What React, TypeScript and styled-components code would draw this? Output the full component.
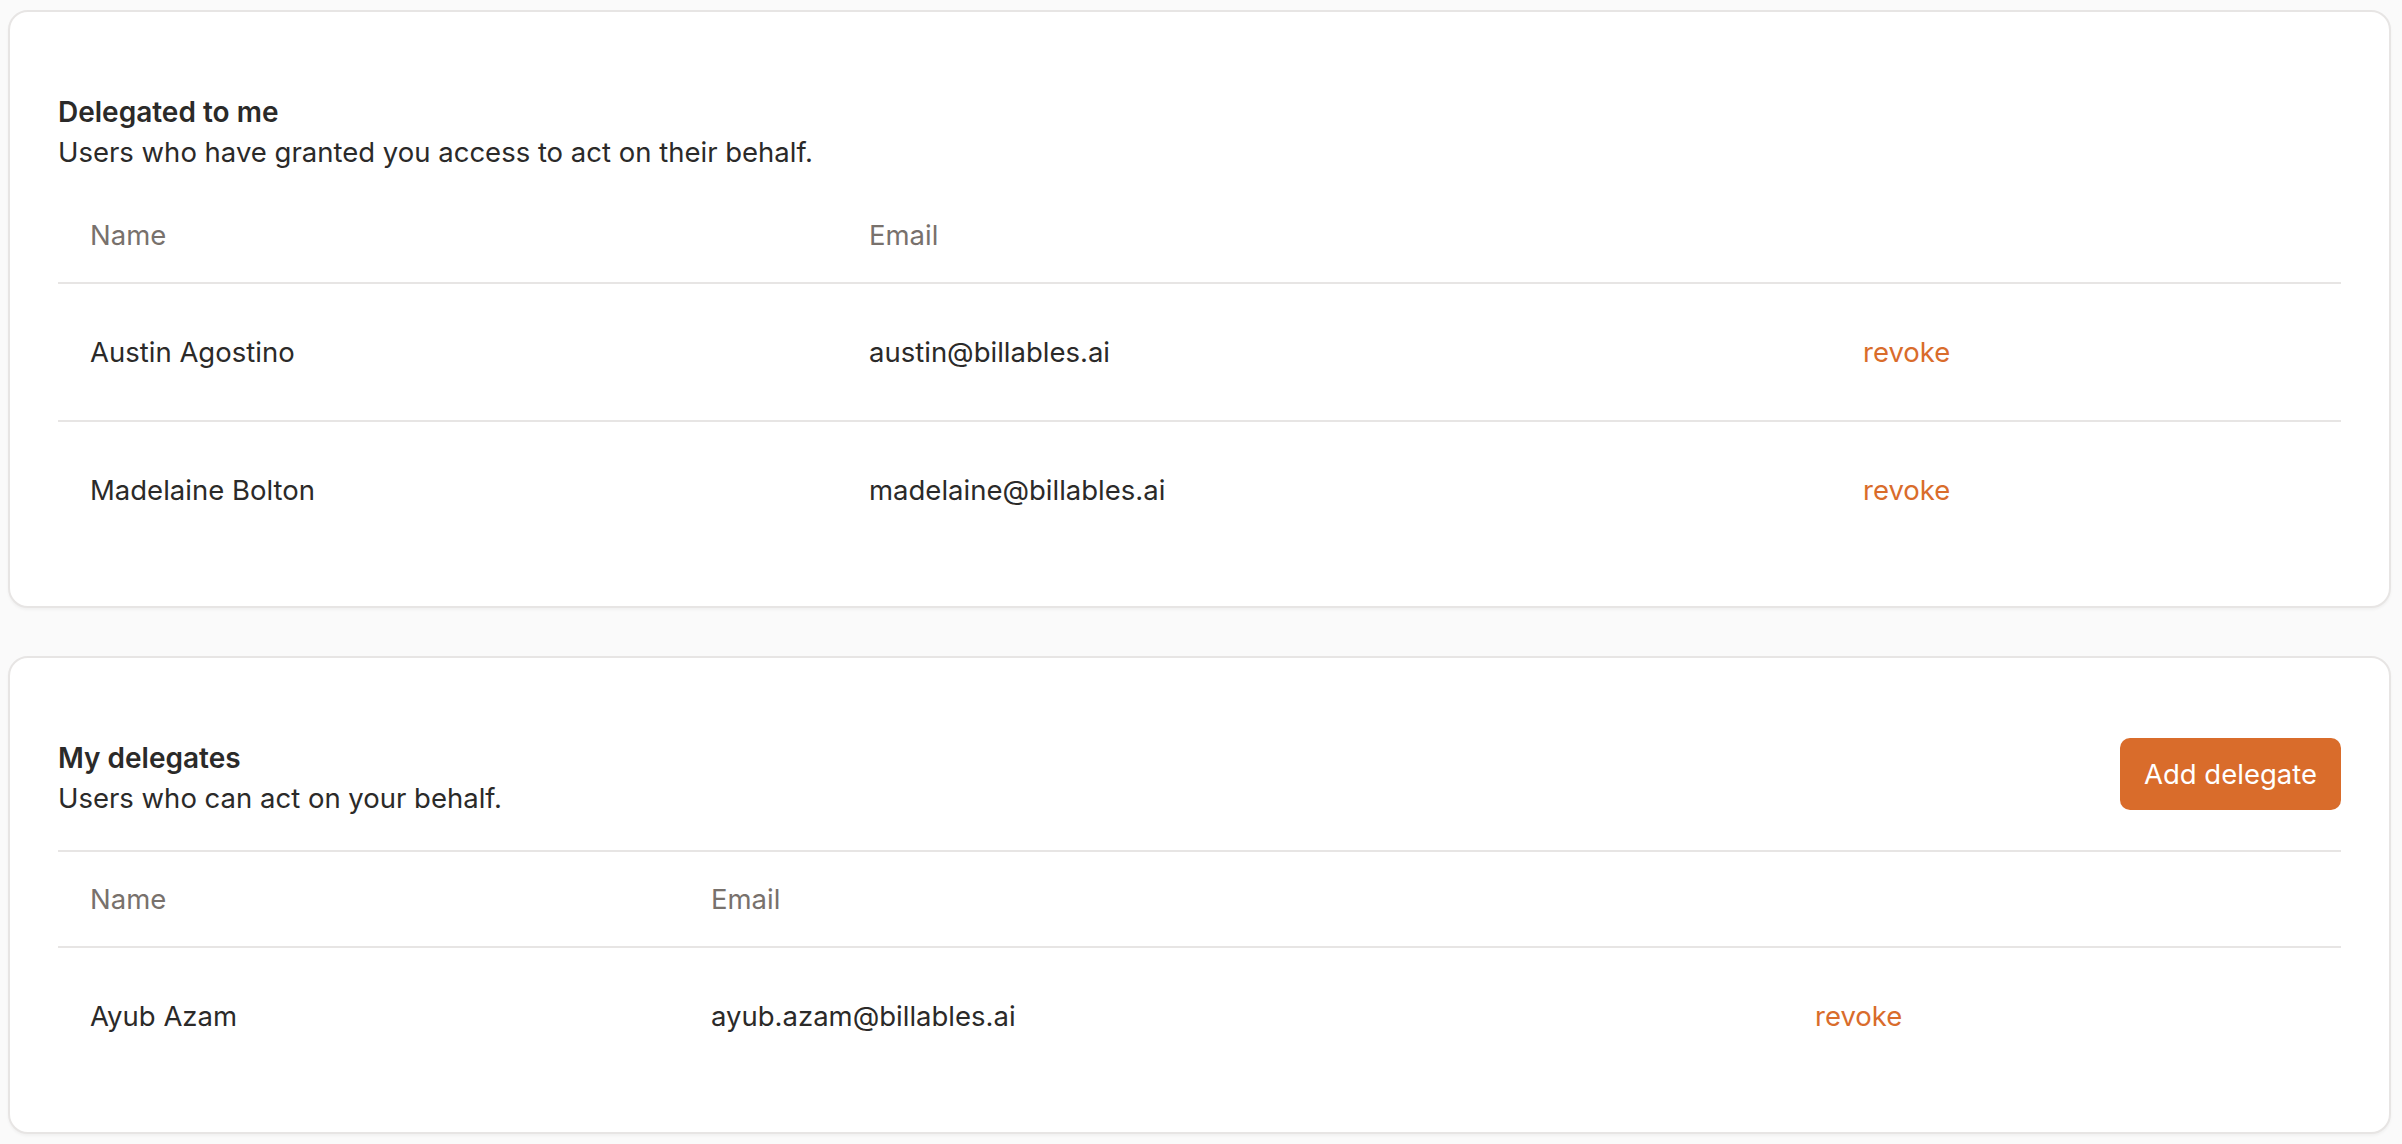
import React from "react";
import styled, { createGlobalStyle } from "styled-components";

const GlobalStyle = createGlobalStyle`
  html, body {
    margin: 0;
    padding: 0;
    background: #fafafa;
  }
  body {
    font-family: Inter, "Noto Sans", "Liberation Sans", sans-serif;
    color: #2b2a29;
    -webkit-font-smoothing: antialiased;
  }
`;

const Page = styled.main`
  display: flex;
  flex-direction: column;
  gap: 48px;
  padding: 10px 11px 10px 8px;
`;

const Card = styled.section`
  background: #ffffff;
  border: 2px solid #e7e5e4;
  border-radius: 20px;
  padding: 48px;
  box-shadow: 0 2px 3px rgba(0, 0, 0, 0.04);
`;

const CardHeader = styled.header<{ $divided?: boolean }>`
  display: flex;
  justify-content: space-between;
  align-items: flex-start;
  padding-top: 32px;
  padding-bottom: ${(p) => (p.$divided ? "32px" : "16px")};
  border-bottom: ${(p) => (p.$divided ? "2px solid #e7e5e4" : "none")};
`;

const HeaderText = styled.div`
  display: flex;
  flex-direction: column;
`;

const Title = styled.h2`
  margin: 0;
  font-size: 28px;
  line-height: 40px;
  font-weight: 600;
  color: #2b2a29;
`;

const Subtitle = styled.p`
  margin: 0;
  font-size: 27.5px;
  line-height: 40px;
  font-weight: 400;
  color: #2b2a29;
`;

const PrimaryButton = styled.button`
  height: 72px;
  padding: 0 24px;
  border: none;
  border-radius: 10px;
  background: #d96c2b;
  color: #ffffff;
  font-family: inherit;
  font-size: 27.5px;
  font-weight: 400;
  cursor: pointer;
`;

const Table = styled.div`
  display: flex;
  flex-direction: column;
`;

const Row = styled.div<{ $cols: string }>`
  display: grid;
  grid-template-columns: ${(p) => p.$cols};
  border-bottom: 2px solid #e7e5e4;
  &:last-child {
    border-bottom: none;
  }
`;

const Cell = styled.div<{ $head?: boolean }>`
  padding: ${(p) => (p.$head ? "27px 32px" : "48px 32px")};
  font-size: 27.5px;
  line-height: 40px;
  color: ${(p) => (p.$head ? "#78716c" : "#2b2a29")};
  white-space: nowrap;
`;

const RevokeLink = styled.a`
  color: #d96c2b;
  text-decoration: none;
  cursor: pointer;
`;

type Person = { name: string; email: string };

const DelegateTable: React.FC<{ cols: string; people: Person[] }> = ({ cols, people }) => (
  <Table>
    <Row $cols={cols}>
      <Cell $head>Name</Cell>
      <Cell $head>Email</Cell>
      <Cell $head />
    </Row>
    {people.map((p) => (
      <Row $cols={cols} key={p.email}>
        <Cell>{p.name}</Cell>
        <Cell>{p.email}</Cell>
        <Cell>
          <RevokeLink>revoke</RevokeLink>
        </Cell>
      </Row>
    ))}
  </Table>
);

export default function App() {
  return (
    <>
      <GlobalStyle />
      <Page>
        <Card>
          <CardHeader>
            <HeaderText>
              <Title>Delegated to me</Title>
              <Subtitle>Users who have granted you access to act on their behalf.</Subtitle>
            </HeaderText>
          </CardHeader>
          <DelegateTable
            cols="779px 994px 1fr"
            people={[
              { name: "Austin Agostino", email: "austin@billables.ai" },
              { name: "Madelaine Bolton", email: "madelaine@billables.ai" },
            ]}
          />
        </Card>
        <Card>
          <CardHeader $divided>
            <HeaderText>
              <Title>My delegates</Title>
              <Subtitle>Users who can act on your behalf.</Subtitle>
            </HeaderText>
            <PrimaryButton>Add delegate</PrimaryButton>
          </CardHeader>
          <DelegateTable
            cols="621px 1104px 1fr"
            people={[{ name: "Ayub Azam", email: "ayub.azam@billables.ai" }]}
          />
        </Card>
      </Page>
    </>
  );
}
